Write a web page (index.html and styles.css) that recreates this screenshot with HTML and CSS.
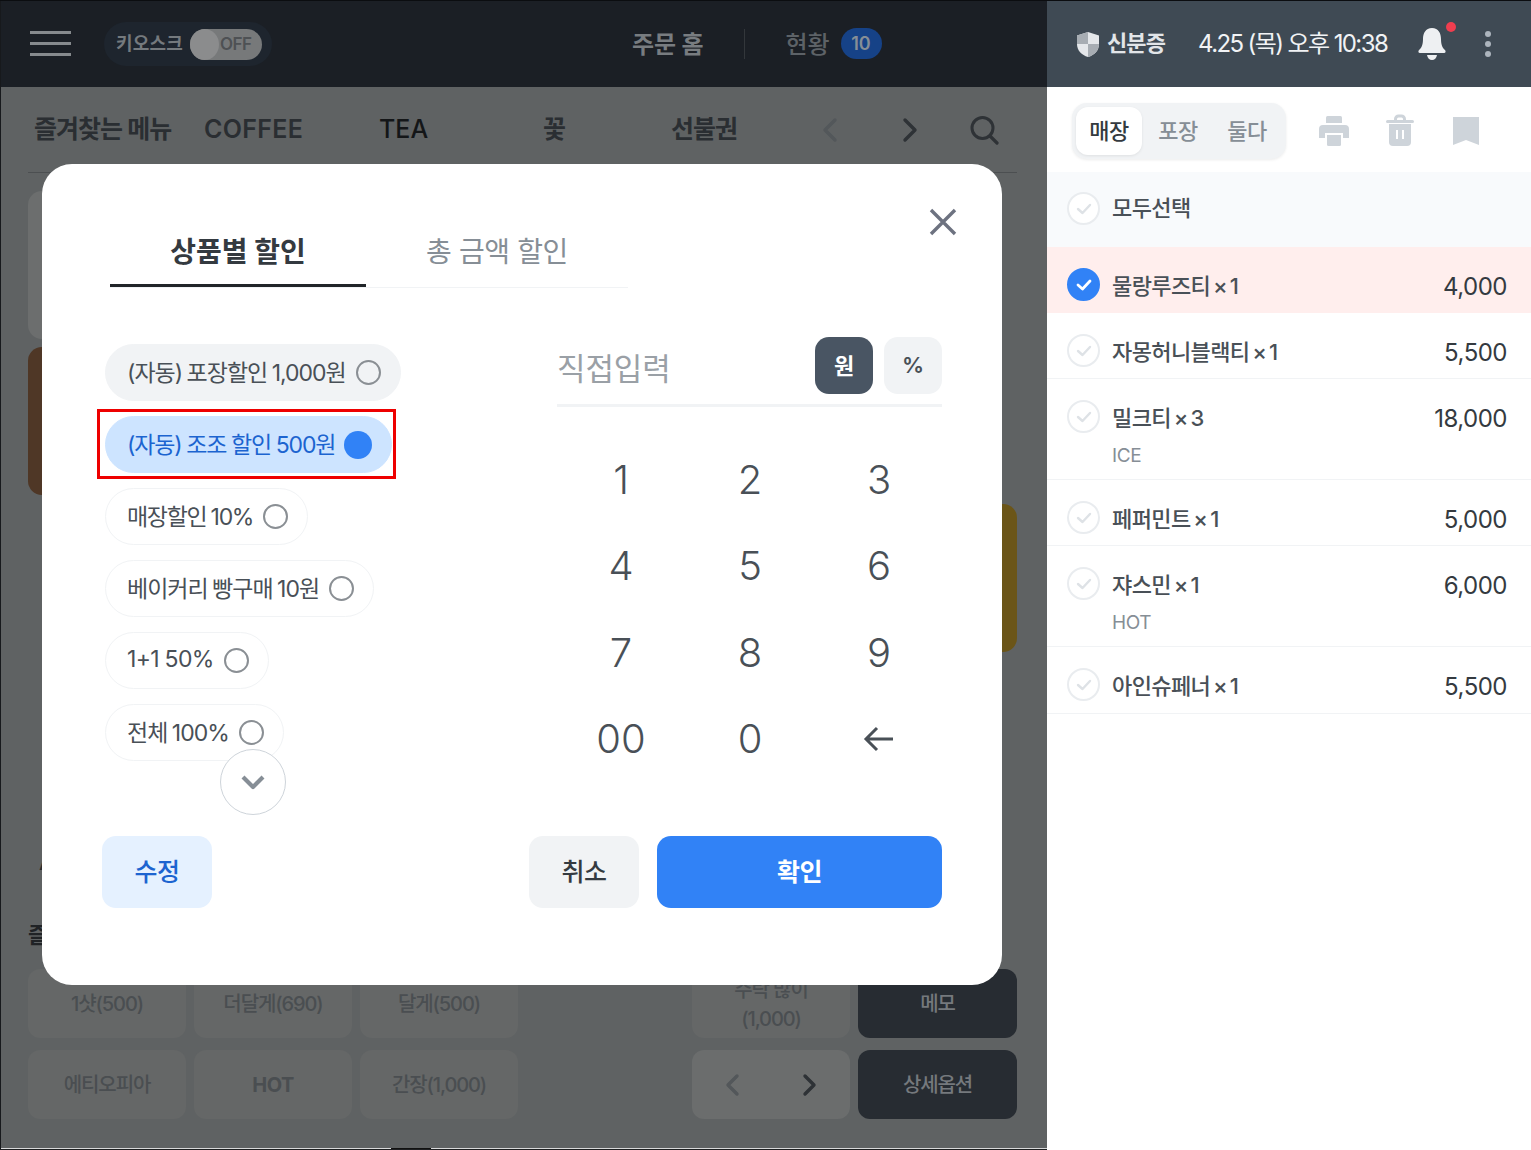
FILE: index.html
```html
<!DOCTYPE html>
<html lang="ko">
<head>
<meta charset="utf-8">
<title>주문 홈</title>
<link rel="stylesheet" href="styles.css">
</head>
<body>
<div class="app">
  <main class="main">
    <header class="topbar">
      <button class="burger"><span></span><span></span><span></span></button>
      <div class="kiosk">
        <span class="kiosk-label">키오스크</span>
        <span class="toggle"><i class="knob"></i><b>OFF</b></span>
      </div>
      <nav class="topnav">
        <span class="topnav-home">주문 홈</span>
        <span class="topnav-sep"></span>
        <span class="topnav-status">현황</span>
        <span class="badge">10</span>
      </nav>
    </header>
    <div class="content">
      <div class="cats">
        <span class="cat cat-fav">즐겨찾는 메뉴</span>
        <span class="cat cat-coffee">COFFEE</span>
        <span class="cat cat-tea">TEA</span>
        <span class="cat cat-flower">꽃</span>
        <span class="cat cat-gift">선불권</span>
        <svg class="cat-arrow cat-arrow-l" width="16" height="26" viewBox="0 0 16 26"><path d="M13 3 3 13l10 10" fill="none" stroke="#53575a" stroke-width="3.4" stroke-linecap="round" stroke-linejoin="round"/></svg>
        <svg class="cat-arrow cat-arrow-r" width="16" height="26" viewBox="0 0 16 26"><path d="m3 3 10 10L3 23" fill="none" stroke="#2e3236" stroke-width="3.4" stroke-linecap="round" stroke-linejoin="round"/></svg>
        <svg class="cat-search" width="30" height="30" viewBox="0 0 30 30"><circle cx="13.5" cy="13" r="10.5" fill="none" stroke="#2e3236" stroke-width="3"/><path d="m21 21 7 7" stroke="#2e3236" stroke-width="3.2" stroke-linecap="round"/></svg>
      </div>
      <div class="menu-grid">
        <div class="card card-grey"></div><div class="blank"></div><div class="blank"></div><div class="blank"></div><div class="blank"></div><div class="blank"></div>
        <div class="card card-brown"></div><div class="blank"></div><div class="blank"></div><div class="blank"></div><div class="blank"></div><div class="blank"></div>
        <div class="blank"></div><div class="blank"></div><div class="blank"></div><div class="blank"></div><div class="blank"></div><div class="card card-yellow"></div>
        <div class="blank blank-a">Ade</div>
      </div>
      <h2 class="opt-title">즐겨찾는 옵션</h2>
      <div class="opt-grid">
        <div class="opt">1샷(500)</div>
        <div class="opt">더달게(690)</div>
        <div class="opt">달게(500)</div>
        <div class="blank"></div>
        <div class="opt">주락 많이<br>(1,000)</div>
        <div class="opt opt-dark">메모</div>
        <div class="opt">에티오피아</div>
        <div class="opt opt-bold">HOT</div>
        <div class="opt">간장(1,000)</div>
        <div class="blank"></div>
        <div class="opt opt-pager">
          <svg width="16" height="24" viewBox="0 0 16 24"><path d="M13 3 4 12l9 9" fill="none" stroke="#53575a" stroke-width="3.4" stroke-linecap="round" stroke-linejoin="round"/></svg>
          <svg width="16" height="24" viewBox="0 0 16 24"><path d="m3 3 9 9-9 9" fill="none" stroke="#2e3236" stroke-width="3.4" stroke-linecap="round" stroke-linejoin="round"/></svg>
        </div>
        <div class="opt opt-dark">상세옵션</div>
      </div>
    </div>
  </main>

  <aside class="side">
    <header class="side-top">
      <div class="idcard">
        <svg width="24" height="27" viewBox="0 0 24 27"><path d="M12 1 23 4.500V13c0 6.500-4.500 11-11 13C5.500 24 1 19.500 1 13V4.500Z" fill="#e4e7ea"/><path d="M12 1v12H1V4.500ZM12 13h11c0 6.500-4.500 11-11 13Z" fill="#a7adb3"/></svg>
        <span class="idcard-text">신분증</span>
      </div>
      <span class="clock">4.25 (목) 오후 10:38</span>
      <span class="bell">
        <svg width="30" height="34" viewBox="0 0 30 34"><path d="M15 1C8.500 1 6 6.500 6 12c0 6-1.500 9-4 11-1 1-.8 3 1 3h24c1.800 0 2-2 1-3-2.500-2-4-5-4-11 0-5.500-2.500-11-9-11Z" fill="#eef0f2"/><path d="M10 28h10c-.5 3-2.500 5-5 5s-4.500-2-5-5Z" fill="#eef0f2"/></svg>
        <i class="bell-dot"></i>
      </span>
      <span class="kebab"><i></i><i></i><i></i></span>
    </header>
    <div class="tools">
      <div class="seg">
        <span class="seg-item seg-on">매장</span>
        <span class="seg-item">포장</span>
        <span class="seg-item">둘다</span>
      </div>
      <div class="tool-icons">
        <svg width="30" height="30" viewBox="0 0 30 30"><path d="M7 1.500A1.500 1.500 0 0 1 8.500 0h13A1.500 1.500 0 0 1 23 1.500V7H7Z" fill="#ced4da"/><path d="M4 9h22a4 4 0 0 1 4 4v9h-6v-5H6v5H0v-9a4 4 0 0 1 4-4Z" fill="#ced4da"/><path d="M8 19h14v9.500a1.500 1.500 0 0 1-1.500 1.500h-11A1.500 1.500 0 0 1 8 28.500Z" fill="#ced4da"/></svg>
        <svg class="tool-trash" width="28" height="32" viewBox="0 0 28 32"><path d="M8 6V5a4.500 4.500 0 0 1 4.500-4.500h3A4.500 4.500 0 0 1 20 5v1h6.500a1.500 1.500 0 0 1 0 3h-25a1.500 1.500 0 0 1 0-3Zm3 0h6V5a1.500 1.500 0 0 0-1.500-1.500h-3A1.500 1.500 0 0 0 11 5Z" fill="#ced4da"/><path d="M3 10h22v18a4 4 0 0 1-4 4H7a4 4 0 0 1-4-4Z" fill="#ced4da"/><path d="M11 16v9M17 16v9" stroke="#fff" stroke-width="2"/></svg>
        <svg class="tool-mark" width="26" height="28" viewBox="0 0 26 28"><path d="M0 0h26v28l-13-5L0 28Z" fill="#ced4da"/></svg>
      </div>
    </div>
    <div class="row row-all">
      <span class="chk"><svg width="16" height="12" viewBox="0 0 16 12"><path d="m2 6 4.500 4L14 2" fill="none" stroke="#dee2e6" stroke-width="2.400" stroke-linecap="round" stroke-linejoin="round"/></svg></span>
      <span class="row-name">모두선택</span>
    </div>
    <div class="row row-on">
      <span class="chk chk-on"><svg width="16" height="12" viewBox="0 0 16 12"><path d="m2 6 4.500 4L14 2" fill="none" stroke="#fff" stroke-width="2.800" stroke-linecap="round" stroke-linejoin="round"/></svg></span>
      <span class="row-name">물랑루즈티 × 1</span>
      <span class="row-price">4,000</span>
    </div>
    <div class="row row-line">
      <span class="chk"><svg width="16" height="12" viewBox="0 0 16 12"><path d="m2 6 4.500 4L14 2" fill="none" stroke="#dee2e6" stroke-width="2.400" stroke-linecap="round" stroke-linejoin="round"/></svg></span>
      <span class="row-name">자몽허니블랙티 × 1</span>
      <span class="row-price">5,500</span>
    </div>
    <div class="row row-line row-tall">
      <span class="chk"><svg width="16" height="12" viewBox="0 0 16 12"><path d="m2 6 4.500 4L14 2" fill="none" stroke="#dee2e6" stroke-width="2.400" stroke-linecap="round" stroke-linejoin="round"/></svg></span>
      <div class="row-body"><span class="row-name">밀크티 × 3</span><span class="row-sub">ICE</span></div>
      <span class="row-price">18,000</span>
    </div>
    <div class="row row-line">
      <span class="chk"><svg width="16" height="12" viewBox="0 0 16 12"><path d="m2 6 4.500 4L14 2" fill="none" stroke="#dee2e6" stroke-width="2.400" stroke-linecap="round" stroke-linejoin="round"/></svg></span>
      <span class="row-name">페퍼민트 × 1</span>
      <span class="row-price">5,000</span>
    </div>
    <div class="row row-line row-tall">
      <span class="chk"><svg width="16" height="12" viewBox="0 0 16 12"><path d="m2 6 4.500 4L14 2" fill="none" stroke="#dee2e6" stroke-width="2.400" stroke-linecap="round" stroke-linejoin="round"/></svg></span>
      <div class="row-body"><span class="row-name">쟈스민 × 1</span><span class="row-sub">HOT</span></div>
      <span class="row-price">6,000</span>
    </div>
    <div class="row row-line row-last">
      <span class="chk"><svg width="16" height="12" viewBox="0 0 16 12"><path d="m2 6 4.500 4L14 2" fill="none" stroke="#dee2e6" stroke-width="2.400" stroke-linecap="round" stroke-linejoin="round"/></svg></span>
      <span class="row-name">아인슈페너 × 1</span>
      <span class="row-price">5,500</span>
    </div>
  </aside>

  <section class="modal">
    <svg class="modal-close" width="28" height="28" viewBox="0 0 28 28"><path d="m2 2 24 24M26 2 2 26" stroke="#6d7280" stroke-width="3.400"/></svg>
    <div class="tabs">
      <span class="tab tab-on">상품별 할인</span>
      <span class="tab">총 금액 할인</span>
    </div>
    <div class="modal-body">
      <div class="chips">
        <span class="chip chip-grey">(자동) 포장할인 1,000원<i class="radio"></i></span>
        <span class="chip chip-on">(자동) 조조 할인 500원<i class="radio radio-on"></i></span>
        <span class="chip chip-tight">매장할인 10%<i class="radio"></i></span>
        <span class="chip">베이커리 빵구매 10원<i class="radio"></i></span>
        <span class="chip chip-latin">1+1 50%<i class="radio"></i></span>
        <span class="chip">전체 100%<i class="radio"></i></span>
        <span class="mark"></span>
        <span class="more"><svg width="26" height="16" viewBox="0 0 26 16"><path d="m3 3 10 10L23 3" fill="none" stroke="#868e96" stroke-width="4.200" stroke-linejoin="round"/></svg></span>
      </div>
      <div class="pad">
        <div class="entry">
          <span class="entry-label">직접입력</span>
          <span class="unit unit-on">원</span>
          <span class="unit">%</span>
        </div>
        <div class="keys">
          <span class="key">1</span><span class="key">2</span><span class="key">3</span>
          <span class="key">4</span><span class="key">5</span><span class="key">6</span>
          <span class="key">7</span><span class="key">8</span><span class="key">9</span>
          <span class="key">00</span><span class="key">0</span>
          <span class="key"><svg width="32" height="26" viewBox="0 0 32 26"><path d="M30 13H3M14 2 3 13l11 11" fill="none" stroke="#495057" stroke-width="3"/></svg></span>
        </div>
      </div>
    </div>
    <div class="modal-foot">
      <span class="btn btn-edit">수정</span>
      <span class="btn btn-cancel">취소</span>
      <span class="btn btn-ok">확인</span>
    </div>
  </section>
</div>
</body>
</html>
```
FILE: styles.css
```css
* { box-sizing: border-box; }
html, body { margin: 0; padding: 0; }
body {
  width: 1531px;
  height: 1150px;
  overflow: hidden;
  background: #fff;
  font-family: Inter, "Noto Sans CJK KR", "Noto Sans", sans-serif;
  color: #343a40;
}
button { border: 0; background: none; padding: 0; }

.app { position: relative; display: flex; width: 1531px; height: 1150px; border-top: 1px solid #0b0d10; }

/* left, dimmed */
.main { position: relative; width: 1047px; flex: none; display: flex; flex-direction: column; border-left: 1px solid #17191c; background: #5f6263; border-bottom: 1px solid #1e2022; box-shadow: inset 0 -1px 0 #d8d9da; }
.main::after { content: ""; position: absolute; left: 390px; bottom: 0; width: 40px; height: 1px; background: #111; }

.topbar { height: 86px; flex: none; background: #1b1f25; display: flex; align-items: center; position: relative; padding: 0 0 2px 29px; }
.burger { width: 41px; display: flex; flex-direction: column; gap: 8px; }
.burger span { height: 3px; background: #868a8d; }
.kiosk { margin: 2px 0 0 33px; height: 44px; width: 168px; border-radius: 22px; background: #1e252e; display: flex; align-items: center; padding-left: 12px; gap: 7px; }
.kiosk-label { font-size: 18px; font-weight: 700; color: #757a7e; letter-spacing: .2px; white-space: nowrap; padding-bottom: 4px; }
.toggle { width: 72px; height: 31px; border-radius: 16px; background: #77797a; display: flex; align-items: center; position: relative; padding-left: 30px; flex: none; }
.knob { position: absolute; left: 0; top: 0; width: 29px; height: 31px; border-radius: 50%; background: #8b8c8d; }
.toggle b { font-size: 17px; font-weight: 600; color: #4e5154; letter-spacing: -.5px; }
.topnav { position: absolute; left: 631px; top: 0; height: 85px; display: flex; align-items: center; }
.topnav-home { font-size: 24px; font-weight: 700; color: #787c80; letter-spacing: -.1px; padding-bottom: 3px; }
.topnav-sep { width: 1px; height: 30px; background: #33373b; margin: 0 41px 0 40px; }
.topnav-status { font-size: 24px; font-weight: 500; color: #5d6267; letter-spacing: -.1px; padding-bottom: 3px; }
.badge { width: 41px; height: 31px; margin-left: 11px; border-radius: 16px; background: #164287; color: #868e96; display: flex; align-items: center; justify-content: center; font-size: 18px; font-weight: 600; }

.content { flex: 1; padding: 0 30px 0 27px; display: flex; flex-direction: column; min-height: 0; }
.cats { height: 86px; flex: none; position: relative; border-bottom: 1px solid #4c4f51; display: flex; align-items: center; color: #2a2e32; }
.cat { position: absolute; top: 26px; font-size: 25px; font-weight: 600; line-height: 32px; white-space: nowrap; }
.cat-fav { left: 6px; letter-spacing: -1px; }
.cat-coffee { left: 176px; letter-spacing: .3px; }
.cat-tea { left: 351px; color: #141618; font-weight: 500; }
.cat-flower { left: 515px; }
.cat-gift { left: 643px; letter-spacing: -1px; }
.cat-arrow { position: absolute; top: 30px; }
.cat-arrow-l { left: 794px; }
.cat-arrow-r { left: 874px; }
.cat-search { position: absolute; left: 941px; top: 28px; }

.menu-grid { margin-top: 17.500px; display: grid; grid-template-columns: repeat(6, minmax(0, 1fr)); grid-auto-rows: 148px; gap: 8.500px 8px; flex: none; height: 729.500px; }
.card { border-radius: 14px; }
.card-grey { background: #6c6e6e; }
.card-brown { background: #4f3726; }
.card-yellow { background: #6b5518; }
.blank-a { grid-row: 5; font-size: 22px; padding: 32px 0 0 11px; color: #2a2d30; font-weight: 500; }
.opt-title { margin: -1px 0 0; height: 36px; font-size: 22px; line-height: 32px; font-weight: 700; color: #202326; flex: none; }
.opt-grid { margin-top: 14px; display: grid; grid-template-columns: repeat(5, 158px) 159px; grid-auto-rows: 69px; row-gap: 12px; column-gap: 8px; }
.opt { border-radius: 12px; background: #656767; color: #4a4e51; font-size: 20px; line-height: 29px; letter-spacing: -1.100px; display: flex; align-items: center; justify-content: center; text-align: center; font-weight: 500; padding-top: 2px; }
.opt-bold { font-weight: 700; letter-spacing: -.6px; }
.opt-dark { background: #272c32; color: #75797d; font-weight: 500; letter-spacing: -1.200px; }
.opt-pager { background: #6b6d6d; gap: 62px; padding-top: 0; }

/* right */
.side { flex: 1; min-width: 0; display: flex; flex-direction: column; background: #fff; }
.side-top { height: 86px; flex: none; background: #3f4a54; display: flex; align-items: center; padding-left: 29px; color: #eef0f2; }
.idcard { display: flex; align-items: center; gap: 7px; font-size: 22px; font-weight: 600; letter-spacing: -.9px; color: #e2e5e8; }
.idcard-text { padding-bottom: 6px; }
.clock { margin-left: 33px; font-size: 24px; letter-spacing: -1.600px; white-space: nowrap; color: #f1f3f5; padding-bottom: 5px; }
.bell { margin-left: 30px; position: relative; display: flex; }
.bell-dot { position: absolute; left: 29px; top: -5px; width: 10px; height: 10px; border-radius: 50%; background: #f03e4f; }
.kebab { margin-left: 38px; display: flex; flex-direction: column; gap: 4px; }
.kebab i { width: 6px; height: 6px; border-radius: 50%; background: #adb5bd; }

.tools { height: 85px; flex: none; display: flex; align-items: center; padding: 2px 0 0 25px; }
.seg { width: 214px; height: 56px; border-radius: 15px; background: #f1f3f5; box-shadow: 0 1px 3px rgba(0,0,0,.08); padding: 4px; display: flex; gap: 3px; }
.seg-item { width: 66px; display: flex; align-items: center; justify-content: center; font-size: 22px; font-weight: 500; color: #868e96; letter-spacing: -.5px; padding-bottom: 4px; }
.seg-on { background: #fff; color: #343a40; border-radius: 12px; box-shadow: 0 1px 3px rgba(0,0,0,.08); }
.tool-icons { margin-left: 33px; display: flex; align-items: center; gap: 37px; }
.tool-trash { margin-top: -2px; }
.tool-mark { margin-left: 2px; }

.row { display: flex; align-items: flex-start; padding: 21px 24px 0 20px; height: 66px; flex: none; font-size: 22px; }
.chk { width: 33px; height: 33px; border-radius: 50%; border: 2px solid #e9ecef; display: flex; align-items: center; justify-content: center; flex: none; background: #fff; }
.chk-on { background: #3182f6; border-color: #3182f6; }
.row-name { margin: 2px 0 0 12px; line-height: 33px; font-weight: 500; color: #495057; letter-spacing: -.6px; word-spacing: -2.500px; white-space: nowrap; }
.row-price { margin: 2px 0 0 auto; line-height: 33px; color: #343a40; font-size: 24px; letter-spacing: -.5px; }
.row-all { height: 75px; background: #f8fafc; align-items: center; padding: 0 24px 2px 20px; }
.row-all .row-name { margin-top: 0; }
.row-on { background: #ffeeed; }
.row-line { border-bottom: 1px solid #f1f3f5; }
.row-tall { height: 101px; }
.row-last { height: 67px; }
.row-body { display: flex; flex-direction: column; }
.row-sub { margin: 8px 0 0 12px; font-size: 19px; line-height: 26px; color: #868e96; letter-spacing: -.4px; }

/* modal */
.modal { position: absolute; left: 42px; top: 163px; width: 960px; height: 821px; border-radius: 30px; background: #fff; padding: 58px 60px 0; }
.modal-close { position: absolute; right: 45px; top: 44px; }
.tabs { display: flex; width: 518px; margin-left: 8px; height: 66px; border-bottom: 1px solid #f1f3f5; }
.tab { width: 256px; height: 65px; flex: none; text-align: center; font-size: 28px; line-height: 60px; letter-spacing: -.4px; color: #868e96; font-weight: 400; }
.tab-on { color: #343a40; font-weight: 700; letter-spacing: 0; border-bottom: 3px solid #212529; }
.tab + .tab { padding-left: 6px; }
.modal-body { display: flex; margin-top: 48px; height: 480px; }
.chips { position: relative; width: 455px; flex: none; display: flex; flex-direction: column; align-items: flex-start; gap: 15px; padding: 8px 0 0 3px; }
.chip { height: 57px; flex: none; border-radius: 29px; border: 1px solid #f1f3f5; background: #fff; display: flex; align-items: center; gap: 10px; padding: 0 19px 4px 21px; font-size: 23px; letter-spacing: -1px; word-spacing: -1px; color: #495057; white-space: nowrap; font-weight: 400; }
.chip-grey { background: #f1f3f5; }
.chip-on { background: #cde4ff; border-color: #cde4ff; color: #1c64d0; letter-spacing: -1.150px; word-spacing: -.6px; }
.chip-latin { letter-spacing: -.7px; word-spacing: 0; }
.chip-tight { letter-spacing: -1.300px; }
.radio { width: 25px; height: 25px; margin-top: 4px; border-radius: 50%; border: 2px solid #8a8f94; flex: none; }
.radio-on { width: 28px; height: 28px; background: #3182f6; border: 0; margin-left: -1px; }
.mark { position: absolute; left: -5px; top: 73px; width: 299px; height: 70px; border: 3px solid #ee0000; }
.more { position: absolute; left: 118px; top: 413px; width: 66px; height: 66px; border-radius: 50%; border: 1px solid #ced4da; background: #fff; display: flex; align-items: center; justify-content: center; }
.pad { width: 385px; flex: none; }
.entry { height: 71px; padding-top: 1px; border-bottom: 3px solid #f1f3f5; display: flex; align-items: flex-start; }
.entry-label { font-size: 31px; line-height: 64px; color: #9aa0a6; letter-spacing: -.1px; margin-right: auto; }
.unit { width: 58px; height: 57px; border-radius: 14px; background: #f1f3f5; color: #495057; font-size: 22px; font-weight: 600; display: flex; align-items: center; justify-content: center; padding-bottom: 2px; }
.unit-on { background: #495563; color: #fff; margin-right: 11px; padding-bottom: 4px; }
.keys { margin: 29px 0 0 -.5px; display: grid; grid-template-columns: repeat(3, 129px); grid-auto-rows: 86.500px; }
.key { display: flex; align-items: center; justify-content: center; font-size: 40px; color: #495057; font-weight: 300; }
.modal-foot { display: flex; margin-top: 20px; }
.btn { height: 72px; border-radius: 14px; display: flex; align-items: center; justify-content: center; font-size: 25px; letter-spacing: -.4px; padding-bottom: 4px; }
.btn-edit { width: 110px; background: #e5f1ff; color: #1c64d0; font-weight: 500; }
.btn-cancel { width: 110px; margin-left: 317px; background: #f1f3f5; color: #343a40; font-weight: 500; }
.btn-ok { width: 285px; margin-left: 18px; background: #3182f6; color: #fff; font-weight: 700; }
```
